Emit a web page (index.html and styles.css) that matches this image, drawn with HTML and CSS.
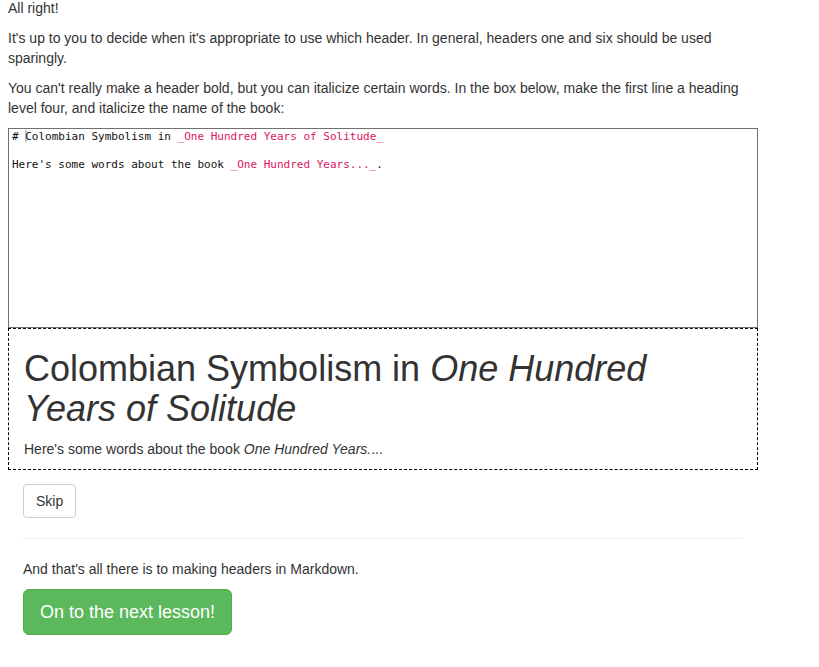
FILE: index.html
```html
<!DOCTYPE html>
<html lang="en">
<head>
<meta charset="utf-8">
<title>Headers</title>
<link rel="stylesheet" href="styles.css">
</head>
<body>
<div class="lesson">
  <p class="first">All right!</p>
  <p>It's up to you to decide when it's appropriate to use which header. In general, headers one and six should be used sparingly.</p>
  <p>You can't really make a header bold, but you can italicize certain words. In the box below, make the first line a heading level four, and italicize the name of the book:</p>
  <div class="editor">
    <div class="line"># <span class="cursor"></span>Colombian Symbolism in <span class="em">_One Hundred Years of Solitude_</span></div>
    <div class="line">&nbsp;</div>
    <div class="line">Here's some words about the book <span class="em">_One Hundred Years..._</span>.</div>
  </div>
  <div class="preview">
    <h1>Colombian Symbolism in <em>One Hundred Years of Solitude</em></h1>
    <p>Here's some words about the book <em>One Hundred Years.</em>...</p>
  </div>
  <div class="footer">
    <button class="btn btn-default" type="button">Skip</button>
    <hr>
    <p>And that's all there is to making headers in Markdown.</p>
    <button class="btn btn-success btn-lg" type="button">On to the next lesson!</button>
  </div>
</div>
</body>
</html>
```
FILE: styles.css
```css
html, body {
  margin: 0;
  padding: 0;
  background: #fff;
}

body {
  font-family: "Liberation Sans", Arial, sans-serif;
  font-size: 14px;
  line-height: 20px;
  color: #333;
}

.lesson {
  width: 750px;
  padding-left: 8px;
}

p {
  margin: 0 0 10px;
}

.first {
  margin-top: -2px;
}

.editor {
  box-sizing: border-box;
  height: 200px;
  border: 1px solid #707070;
  padding: 1px 3px;
  font-family: "DejaVu Sans Mono", "Liberation Mono", monospace;
  font-size: 11px;
  line-height: 14px;
  color: #111;
}

.editor .line {
  white-space: pre;
  height: 14px;
}

.editor .em {
  color: #dc1460;
}

.cursor {
  display: inline-block;
  width: 2px;
  height: 12px;
  margin-right: -2px;
  background: #c4c4c4;
  vertical-align: -2px;
}

.preview {
  border: 1px dashed #000;
  padding: 0 15px;
}

.preview h1 {
  font-size: 36px;
  font-weight: normal;
  line-height: 1.1;
  margin: 20px 0 11px;
  color: #333;
}

.footer {
  padding: 14px 15px 0;
}

.btn {
  display: inline-block;
  font-family: inherit;
  font-size: 14px;
  line-height: 20px;
  padding: 6px 12px;
  border: 1px solid transparent;
  border-radius: 4px;
  cursor: pointer;
  margin: 0;
}

.btn-default {
  background: #fff;
  color: #333;
  border-color: #ccc;
}

.btn-success {
  background: #5cb85c;
  border-color: #4cae4c;
  color: #fff;
}

.btn-lg {
  font-size: 18px;
  line-height: 24px;
  padding: 10px 16px;
  border-radius: 6px;
}

hr {
  margin: 20px 0;
  border: 0;
  border-top: 1px solid #eee;
}
```
